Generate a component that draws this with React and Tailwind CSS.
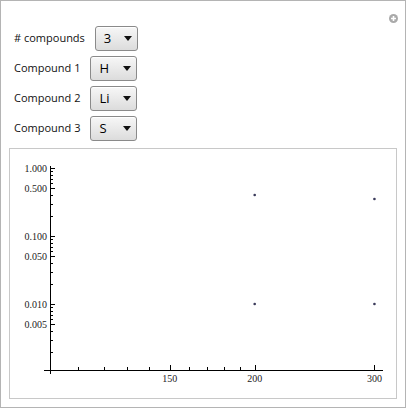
const SELECTS = [
    { label: '# compounds', value: '3', width: 'w-[43px]' },
    { label: 'Compound 1', value: 'H', width: 'w-[47px]' },
    { label: 'Compound 2', value: 'Li', width: 'w-[47px]' },
    { label: 'Compound 3', value: 'S', width: 'w-[47px]' },
];

const POINTS = [
    [200, 0.4],
    [300, 0.35],
    [200, 0.01],
    [300, 0.01],
];

// log-log axes, pixels per decade
const xPos = (u) => 40 + 680 * Math.log10(u / 100);
const yPos = (v) => 19 - 68 * Math.log10(v);

const Y_MAJOR = [
    [1, '1.000'],
    [0.5, '0.500'],
    [0.1, '0.100'],
    [0.05, '0.050'],
    [0.01, '0.010'],
    [0.005, '0.005'],
];
const Y_MINOR = [0.9, 0.8, 0.7, 0.6, 0.4, 0.3, 0.2, 0.09, 0.08, 0.07, 0.06, 0.04, 0.03, 0.02, 0.009, 0.008, 0.007, 0.006, 0.004, 0.003, 0.002];
const X_MAJOR = [150, 200, 300];
const X_MINOR = [110, 120, 130, 140, 160, 170, 180, 190];

function Select({ value, width }) {
    return (
        <div className={`flex h-[25px] ${width} items-center justify-between rounded-[3px] border border-[#8a8a8a] bg-gradient-to-b from-[#f7f7f7] to-[#dcdcdc] pl-[8px] pr-[5px] text-[13px] text-black shadow-[inset_0_1px_0_#fff]`}>
            <span>{value}</span>
            <svg width="8" height="5" viewBox="0 0 8 5"><path d="M0 0h8L4 5z" fill="#111" /></svg>
        </div>
    );
}

function Chart() {
    return (
        <svg width="388" height="247" className="block" style={{ fontFamily: '"Liberation Serif", serif' }}>
            <line x1="40.5" y1="17" x2="40.5" y2="225" stroke="#000" strokeWidth="1" />
            <line x1="34" y1="221.5" x2="373" y2="221.5" stroke="#000" strokeWidth="1" />
            {Y_MAJOR.map(([v, t]) => (
                <g key={t}>
                    <line x1="40" x2="45" y1={Math.round(yPos(v)) + 0.5} y2={Math.round(yPos(v)) + 0.5} stroke="#000" />
                    <text x="37" y={yPos(v) + 3.5} textAnchor="end" fontSize="10" fill="#222">{t}</text>
                </g>
            ))}
            {Y_MINOR.map((v) => (
                <line key={v} x1="40" x2="43" y1={Math.round(yPos(v)) + 0.5} y2={Math.round(yPos(v)) + 0.5} stroke="#000" />
            ))}
            {X_MAJOR.map((u) => (
                <g key={u}>
                    <line y1="216" y2="222" x1={Math.round(xPos(u)) + 0.5} x2={Math.round(xPos(u)) + 0.5} stroke="#000" />
                    <text x={xPos(u)} y="233" textAnchor="middle" fontSize="10" fill="#222">{u}</text>
                </g>
            ))}
            {X_MINOR.map((u) => (
                <line key={u} y1="218" y2="222" x1={Math.round(xPos(u)) + 0.5} x2={Math.round(xPos(u)) + 0.5} stroke="#000" />
            ))}
            {POINTS.map(([u, v]) => (
                <circle key={`${u}-${v}`} cx={xPos(u)} cy={yPos(v)} r="1.3" fill="#3a3a5a" />
            ))}
        </svg>
    );
}

export default function App() {
    return (
        <div className="h-[411px] w-[409px] bg-white" style={{ fontFamily: '"Open Sans", "Noto Sans", sans-serif' }}>
            <div className="relative flex h-[408px] w-[406px] flex-col border border-[#b4b4b4] px-[8px] pb-[8px] pt-[25px]">
                <span className="absolute right-[7px] top-[13px] flex h-[9px] w-[9px] items-center justify-center rounded-full bg-[#aaaaaa]">
                    <svg width="7" height="7" viewBox="0 0 7 7"><path d="M3.5 1v5M1 3.5h5" stroke="#fff" strokeWidth="1.6" /></svg>
                </span>
                <div className="flex flex-col gap-[5px] pl-[5px]">
                    {SELECTS.map((s) => (
                        <div key={s.label} className="flex items-center gap-[10px]">
                            <span className="text-[11px] text-[#111]">{s.label}</span>
                            <Select value={s.value} width={s.width} />
                        </div>
                    ))}
                </div>
                <div className="mt-[7px] flex-1 border border-[#c8c8c8] bg-white">
                    <Chart />
                </div>
            </div>
        </div>
    );
}
